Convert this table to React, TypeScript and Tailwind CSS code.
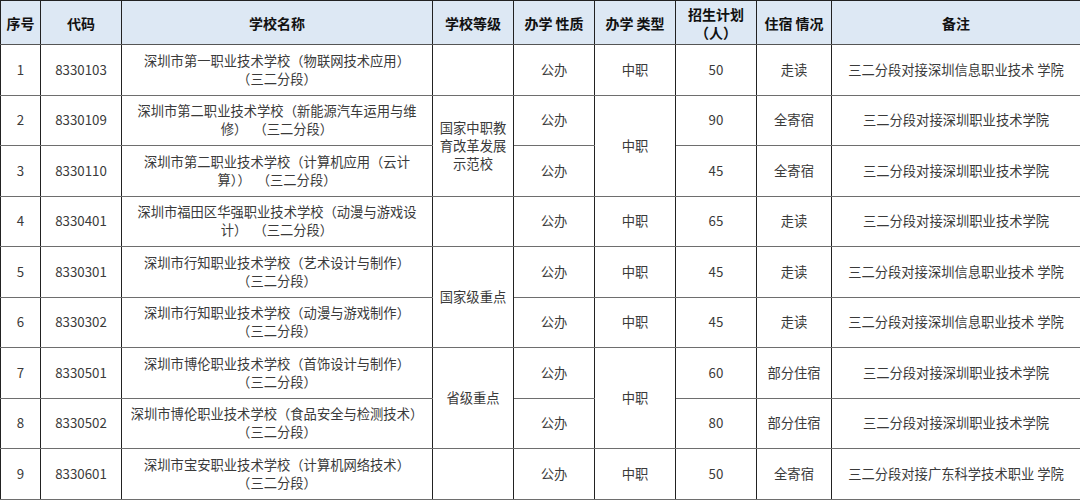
import React from "react";

type Row = {
  no: string;
  code: string;
  name: string[];
  level?: { text: string[]; span: number } | null;
  nature: string;
  type?: { text: string; span: number } | null;
  plan: string;
  stay: string;
  note: string;
};

const rows: Row[] = [
  { no: "1", code: "8330103", name: ["深圳市第一职业技术学校（物联网技术应用）", "（三二分段）"], level: { text: [], span: 1 }, nature: "公办", type: { text: "中职", span: 1 }, plan: "50", stay: "走读", note: "三二分段对接深圳信息职业技术 学院" },
  { no: "2", code: "8330109", name: ["深圳市第二职业技术学校（新能源汽车运用与维", "修）\u00a0\u00a0（三二分段）"], level: { text: ["国家中职教", "育改革发展", "示范校"], span: 2 }, nature: "公办", type: { text: "中职", span: 2 }, plan: "90", stay: "全寄宿", note: "三二分段对接深圳职业技术学院" },
  { no: "3", code: "8330110", name: ["深圳市第二职业技术学校（计算机应用（云计", "算））\u00a0\u00a0（三二分段）"], level: null, nature: "公办", type: null, plan: "45", stay: "全寄宿", note: "三二分段对接深圳职业技术学院" },
  { no: "4", code: "8330401", name: ["深圳市福田区华强职业技术学校（动漫与游戏设", "计）\u00a0\u00a0（三二分段）"], level: { text: [], span: 1 }, nature: "公办", type: { text: "中职", span: 1 }, plan: "65", stay: "走读", note: "三二分段对接深圳职业技术学院" },
  { no: "5", code: "8330301", name: ["深圳市行知职业技术学校（艺术设计与制作）", "（三二分段）"], level: { text: ["国家级重点"], span: 2 }, nature: "公办", type: { text: "中职", span: 1 }, plan: "45", stay: "走读", note: "三二分段对接深圳信息职业技术 学院" },
  { no: "6", code: "8330302", name: ["深圳市行知职业技术学校（动漫与游戏制作）", "（三二分段）"], level: null, nature: "公办", type: { text: "中职", span: 1 }, plan: "45", stay: "走读", note: "三二分段对接深圳信息职业技术 学院" },
  { no: "7", code: "8330501", name: ["深圳市博伦职业技术学校（首饰设计与制作）", "（三二分段）"], level: { text: ["省级重点"], span: 2 }, nature: "公办", type: { text: "中职", span: 2 }, plan: "60", stay: "部分住宿", note: "三二分段对接深圳职业技术学院" },
  { no: "8", code: "8330502", name: ["深圳市博伦职业技术学校（食品安全与检测技术）", "（三二分段）"], level: null, nature: "公办", type: null, plan: "80", stay: "部分住宿", note: "三二分段对接深圳职业技术学院" },
  { no: "9", code: "8330601", name: ["深圳市宝安职业技术学校（计算机网络技术）", "（三二分段）"], level: { text: [], span: 1 }, nature: "公办", type: { text: "中职", span: 1 }, plan: "50", stay: "全寄宿", note: "三二分段对接广东科学技术职业 学院" },
];

const cell = "border-x border-x-[#222] border-y border-y-[#6e6e6e] text-center align-middle px-1";
const head = `${cell} border-t-[#222] border-b-[#555]`;

export default function App() {
  return (
    <div
      className="w-[1080px] h-[500px] bg-white overflow-hidden"
      style={{ fontFamily: '"Noto Sans CJK SC", "Noto Sans", sans-serif' }}
    >
      <table className="table-fixed border-collapse w-[1080px] text-[13.3px] leading-[18px] text-[#3a3a3a]">
        <colgroup>
          <col className="w-[40px]" />
          <col className="w-[81px]" />
          <col className="w-[311px]" />
          <col className="w-[81px]" />
          <col className="w-[81px]" />
          <col className="w-[81px]" />
          <col className="w-[81px]" />
          <col className="w-[75px]" />
          <col className="w-[249px]" />
        </colgroup>
        <thead>
          <tr className="h-[44px] bg-[#dde8f4] font-bold text-[#111] text-[14px]">
            <th className={head}>序号</th>
            <th className={head}>代码</th>
            <th className={head}>学校名称</th>
            <th className={head}>学校等级</th>
            <th className={head}>办学 性质</th>
            <th className={head}>办学 类型</th>
            <th className={head}>
              <div>招生计划</div>
              <div>（人）</div>
            </th>
            <th className={head}>住宿 情况</th>
            <th className={head}>备注</th>
          </tr>
        </thead>
        <tbody>
          {rows.map((r) => (
            <tr key={r.no} className="h-[50.5px]">
              <td className={cell}>{r.no}</td>
              <td className={cell}>{r.code}</td>
              <td className={cell}>
                {r.name.map((n, i) => (
                  <div key={i}>{n}</div>
                ))}
              </td>
              {r.level && (
                <td className={cell} rowSpan={r.level.span}>
                  {r.level.text.map((t, i) => (
                    <div key={i}>{t}</div>
                  ))}
                </td>
              )}
              <td className={cell}>{r.nature}</td>
              {r.type && (
                <td className={cell} rowSpan={r.type.span}>
                  {r.type.text}
                </td>
              )}
              <td className={cell}>{r.plan}</td>
              <td className={cell}>{r.stay}</td>
              <td className={cell}>{r.note}</td>
            </tr>
          ))}
        </tbody>
      </table>
    </div>
  );
}
